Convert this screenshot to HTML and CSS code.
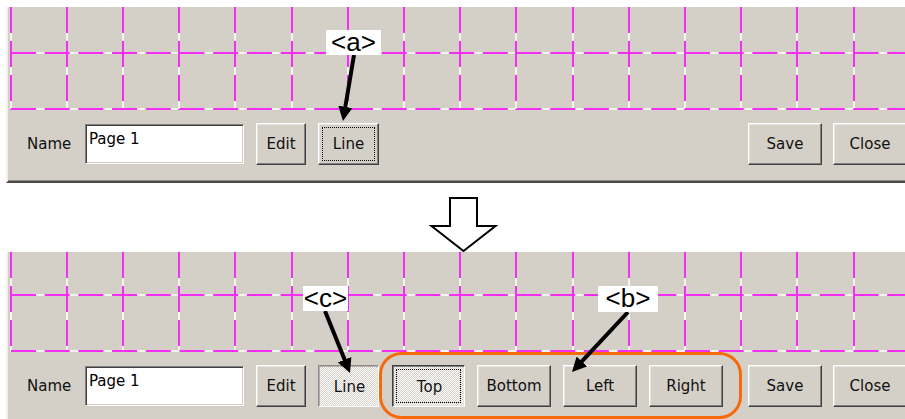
FILE: index.html
```html
<!DOCTYPE html>
<html lang="en">
<head>
  <meta charset="UTF-8">
  <title>Page layout: line buttons</title>
  <link rel="stylesheet" href="styles.css">
</head>
<body>

  <!-- before -->
  <div class="panel panel-top">
    <svg class="grid" width="899" height="103">
      <path class="gap" d="M3 0V103M59 0V103M115 0V103M171 0V103M227 0V103M284 0V103M340 0V103M396 0V103M452 0V103M508 0V103M565 0V103M621 0V103M677 0V103M733 0V103M789 0V103M846 0V103"/>
      <path class="gap" d="M3 46H899M3 102H899"/>
      <path class="dash-v" d="M3 0V103M59 0V103M115 0V103M171 0V103M227 0V103M284 0V103M340 0V103M396 0V103M452 0V103M508 0V103M565 0V103M621 0V103M677 0V103M733 0V103M789 0V103M846 0V103"/>
      <path class="dash-h" d="M3 46H899M3 102H899"/>
    </svg>
    <div class="toolbar">
      <span class="label">Name</span>
      <input class="name-field" type="text" value="Page 1">
      <button class="btn w-edit">Edit</button>
      <button class="btn w-line focused">Line</button>
      <button class="btn w-save push-right">Save</button>
      <button class="btn w-close">Close</button>
    </div>
  </div>

  <div class="between">
    <svg width="72" height="69">
      <polygon class="down-arrow" points="22,15 49,15 49,43 67.5,43 35.5,68 3.5,43 22,43"/>
    </svg>
  </div>

  <!-- after -->
  <div class="panel panel-bottom">
    <svg class="grid" width="899" height="100">
      <path class="gap" d="M3 0V100M59 0V100M115 0V100M171 0V100M227 0V100M284 0V100M340 0V100M396 0V100M452 0V100M508 0V100M565 0V100M621 0V100M677 0V100M733 0V100M789 0V100M846 0V100"/>
      <path class="gap" d="M3 43H899M3 99H899"/>
      <path class="dash-v" d="M3 0V100M59 0V100M115 0V100M171 0V100M227 0V100M284 0V100M340 0V100M396 0V100M452 0V100M508 0V100M565 0V100M621 0V100M677 0V100M733 0V100M789 0V100M846 0V100"/>
      <path class="dash-h" d="M3 43H899M3 99H899"/>
    </svg>
    <div class="toolbar">
      <span class="label">Name</span>
      <input class="name-field" type="text" value="Page 1">
      <button class="btn w-edit">Edit</button>
      <button class="btn w-line latched">Line</button>
      <button class="btn w-top pressed focused">Top</button>
      <button class="btn w-side">Bottom</button>
      <button class="btn w-side">Left</button>
      <button class="btn w-side">Right</button>
      <button class="btn w-save push-right">Save</button>
      <button class="btn w-close">Close</button>
    </div>
  </div>

  <!-- callouts drawn over the screenshots -->
  <div class="notes">
    <svg width="905" height="419">
      <defs>
        <marker id="head" viewBox="0 0 10 10" refX="4" refY="5" markerWidth="3.6" markerHeight="3.8" orient="auto">
          <path d="M0 0L10 5L0 10Z"/>
        </marker>
      </defs>
      <rect class="group-ring" x="380.5" y="353.5" width="360" height="64" rx="21"/>
      <line class="pointer" x1="354" y1="55" x2="344.4" y2="112.5"/>
      <line class="pointer" x1="325" y1="311" x2="346.8" y2="365"/>
      <line class="pointer" x1="628" y1="312" x2="577.9" y2="365.7"/>
    </svg>
    <span class="tag tag-a">&lt;a&gt;</span>
    <span class="tag tag-c">&lt;c&gt;</span>
    <span class="tag tag-b">&lt;b&gt;</span>
  </div>

</body>
</html>
```

FILE: styles.css
```css
html, body {
  overflow: hidden;
}

body {
  margin: 0;
  background-color: #fff;
  font-family: 'DejaVu Sans', sans-serif;
  position: relative;
  width: 905px;
  height: 419px;
}

.panel {
  width: 901px;
  margin-left: 6px;
  background-color: #d4d0c8;
  border-left: 2px solid #f3f1ec;
  box-sizing: border-box;
}

.panel-top {
  margin-top: 7px;
  border-bottom: 2px solid #4c4c4c;
  box-shadow: inset 0 -1px #8a8a8a;
}

.grid {
  display: block;
}

.grid path {
  fill: none;
  stroke-width: 2;
}

.grid .gap {
  stroke: #f6f4ef;
}

.grid .dash-v {
  stroke: #f52ef5;
  stroke-dasharray: 26 8;
}

.grid .dash-h {
  stroke: #f52ef5;
  stroke-dasharray: 25 8.7;
}

.toolbar {
  display: flex;
  align-items: center;
  gap: 12px;
  height: 71px;
  padding: 0 0 3px 19px;
  box-sizing: border-box;
}

.label {
  width: 46px;
  font-size: 15px;
  color: #111;
}

.name-field {
  width: 159px;
  height: 40px;
  padding: 4px 3px 14px;
  box-sizing: border-box;
  font-family: 'DejaVu Sans', sans-serif;
  font-size: 15px;
  line-height: 18px;
  color: #000;
  background: #fff;
  border: 1px solid;
  border-color: #808080 #fff #fff #808080;
  box-shadow: inset 1px 1px #404040, inset -1px -1px #d4d0c8;
  outline: none;
}

.btn {
  height: 42px;
  padding: 0;
  font-family: 'DejaVu Sans', sans-serif;
  font-size: 15px;
  color: #111;
  background-color: #d4d0c8;
  border: 1px solid;
  border-color: #fff #404040 #404040 #fff;
  box-shadow: inset -1px -1px #808080, inset 1px 1px #e6e4de;
  box-sizing: border-box;
}

.w-edit { width: 50px; }
.w-line { width: 61px; }
.w-top { width: 73px; margin-left: 1px; }
.w-side { width: 74px; }
.w-save { width: 74px; }
.w-close { width: 74px; margin-left: -1px; }

.push-right {
  margin-left: auto;
}

.focused {
  outline: 1px dotted #000;
  outline-offset: -5px;
}

.latched,
.pressed {
  background: repeating-conic-gradient(#fff 0 25%, #d4d0c8 0 50%) 0 0 / 2px 2px;
  padding: 2px 0 0 2px;
}

.latched {
  border-color: #8c8c8c #fff #fff #8c8c8c;
  box-shadow: inset 1px 1px #b4b0a8, inset -1px -1px #e6e4de;
}

.pressed {
  border-color: #404040 #fff #fff #404040;
  box-shadow: inset 1px 1px #808080, inset -1px -1px #e6e4de;
}

.between {
  height: 69px;
  padding-left: 428px;
}

.between svg {
  display: block;
}

.down-arrow {
  fill: #fff;
  stroke: #000;
  stroke-width: 2;
  stroke-linejoin: miter;
}

.panel-bottom {
  height: 180px;
}

/* annotations */
.notes {
  position: absolute;
  top: 0;
  left: 0;
  width: 905px;
  height: 419px;
  pointer-events: none;
}

.notes svg {
  display: block;
}

.group-ring {
  fill: none;
  stroke: #f76a0c;
  stroke-width: 3;
}

.pointer {
  stroke: #000;
  stroke-width: 4;
  marker-end: url(#head);
}

.tag {
  position: absolute;
  height: 25px;
  background: #fff;
  font-family: 'Liberation Sans', Arial, sans-serif;
  font-size: 26px;
  line-height: 25px;
  text-align: center;
  color: #000;
}

.tag-a { left: 326px; top: 30px; width: 55px; }
.tag-c { left: 303px; top: 286px; width: 45px; }
.tag-b { left: 598px; top: 286px; width: 60px; height: 26px; }
```
